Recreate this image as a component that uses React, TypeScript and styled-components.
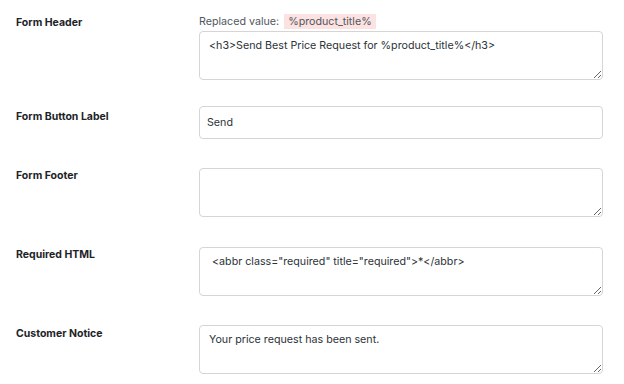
import React from "react";
import styled, { createGlobalStyle } from "styled-components";

const Global = createGlobalStyle`
  html, body { margin: 0; padding: 0; background: #ffffff; }
  body { font-family: Inter, "Noto Sans", Arial, sans-serif; }
`;

const Page = styled.div`
  width: 624px;
  height: 384px;
  padding: 14px 0 0 16px;
  box-sizing: border-box;
  display: flex;
  flex-direction: column;
`;

const Row = styled.div<{ $top: number }>`
  display: grid;
  grid-template-columns: 183px 404px;
  align-items: start;
  margin-top: ${(p) => p.$top}px;
`;

const Label = styled.div<{ $pt: number }>`
  padding-top: ${(p) => p.$pt}px;
  font-size: 10.5px;
  line-height: 13px;
  font-weight: 700;
  color: #1d2327;
`;

const Field = styled.div`
  display: flex;
  flex-direction: column;
  gap: 2px;
`;

const Hint = styled.div`
  display: flex;
  align-items: center;
  gap: 5px;
  height: 15px;
  font-size: 10.7px;
  color: #50575e;
`;

const Code = styled.span`
  background: #fde2e2;
  color: #50575e;
  padding: 1px 4px;
  line-height: 13px;
  font-size: 10.7px;
`;

const Area = styled.textarea`
  box-sizing: border-box;
  width: 404px;
  height: 49px;
  margin: 0;
  padding: 6px 9px;
  border: 1px solid #d5d5d8;
  border-radius: 4px;
  font-family: Inter, "Noto Sans", Arial, sans-serif;
  font-size: 10.7px;
  line-height: 16px;
  color: #2c3338;
  background: #fff;
  resize: vertical;
  outline: none;
  display: block;
`;

const Input = styled.input`
  box-sizing: border-box;
  width: 404px;
  height: 33px;
  margin: 0;
  padding: 0 7px;
  border: 1px solid #d5d5d8;
  border-radius: 4px;
  font-family: Inter, "Noto Sans", Arial, sans-serif;
  font-size: 10.7px;
  color: #2c3338;
  background: #fff;
  outline: none;
  display: block;
`;

export default function App() {
  return (
    <>
      <Global />
      <Page>
        <Row $top={0}>
          <Label $pt={2}>Form Header</Label>
          <Field>
            <Hint>
              <span>Replaced value:</span>
              <Code>%product_title%</Code>
            </Hint>
            <Area readOnly defaultValue="<h3>Send Best Price Request for %product_title%</h3>" />
          </Field>
        </Row>
        <Row $top={26}>
          <Label $pt={4}>Form Button Label</Label>
          <Field>
            <Input readOnly defaultValue="Send" />
          </Field>
        </Row>
        <Row $top={29}>
          <Label $pt={1}>Form Footer</Label>
          <Field>
            <Area readOnly defaultValue="" />
          </Field>
        </Row>
        <Row $top={30}>
          <Label $pt={1}>Required HTML</Label>
          <Field>
            <Area readOnly defaultValue={' <abbr class="required" title="required">*</abbr>'} />
          </Field>
        </Row>
        <Row $top={29}>
          <Label $pt={2}>Customer Notice</Label>
          <Field>
            <Area readOnly defaultValue="Your price request has been sent." />
          </Field>
        </Row>
      </Page>
    </>
  );
}
